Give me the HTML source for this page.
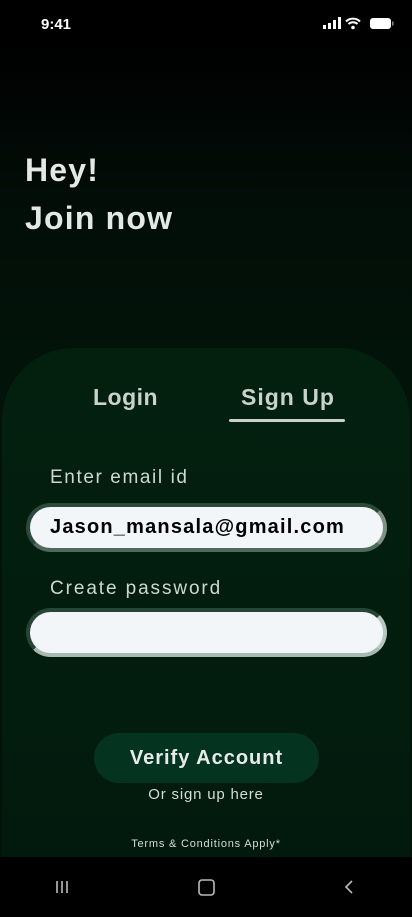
<!DOCTYPE html>
<html><head><meta charset="utf-8"><style>
*{margin:0;padding:0;box-sizing:border-box}
body{width:412px;height:917px;overflow:hidden;background:linear-gradient(#000 0,#000 40px,#020d08 200px,#021309 350px);font-family:"Liberation Sans",sans-serif;position:relative;color:#dfe6e1}
.abs{position:absolute}
.time{left:41px;top:16px;font-size:15px;color:#fff;font-weight:bold}
h1{position:absolute;left:25px;font-size:32px;font-weight:bold;color:#e4e9e5;letter-spacing:1.2px}
.card{left:2px;top:348px;width:408px;height:520px;background:linear-gradient(#03200f,#021a0d);border-radius:72px 72px 0 0}
.tab{font-size:23px;font-weight:bold;color:#c9d3cc;top:384px;letter-spacing:0.5px}
.ul{left:229px;top:419px;width:116px;height:3px;border-radius:2px;background:#c9d3cc}
.lbl{left:50px;font-size:19px;color:#ced8d1;letter-spacing:1.6px}
.inp{left:26px;width:361px;height:49px;border-radius:25px;background:#f3f6f9;border:4px solid #2a4a3a;border-right-color:#7f9088;border-bottom-color:#4e6a5c}
.btn{left:94px;top:733px;width:225px;height:50px;border-radius:25px;background:#04331f;text-align:center;line-height:50px;font-size:20px;font-weight:bold;color:#e8ece9;letter-spacing:1px}
.nav{left:0;top:857px;width:412px;height:60px;background:#000}
</style></head><body>
<div class="abs time">9:41</div>
<svg class="abs" style="left:323px;top:17px" width="72" height="14" viewBox="0 0 72 14">
<rect x="0" y="8" width="3" height="4" fill="#fff"/><rect x="5" y="6" width="3" height="6" fill="#fff"/><rect x="10" y="3" width="3" height="9" fill="#fff"/><rect x="15" y="0" width="3" height="12" fill="#fff"/>
<path d="M23 4.5a10 10 0 0 1 14 0M25.5 7a6.5 6.5 0 0 1 9 0" stroke="#fff" stroke-width="2" fill="none"/><circle cx="30" cy="10.5" r="1.8" fill="#fff"/>
<rect x="47" y="1" width="21" height="11" rx="3" fill="#fff"/><rect x="69" y="4.5" width="1.5" height="4" fill="#888"/>
</svg>
<h1 style="top:152px">Hey!</h1>
<h1 style="top:200px">Join now</h1>
<div class="abs card"></div>
<div class="abs tab" style="left:93px">Login</div>
<div class="abs tab" style="left:241px;letter-spacing:1px">Sign Up</div>
<div class="abs ul"></div>
<div class="abs lbl" style="top:467px">Enter email id</div>
<div class="abs inp" style="top:503px;padding-left:20px;line-height:41px;font-size:20px;font-weight:bold;color:#000;letter-spacing:1.2px">Jason_mansala@gmail.com</div>
<div class="abs lbl" style="top:578px;letter-spacing:1.9px">Create password</div>
<div class="abs inp" style="top:608px;border-color:#254636 #b8c8c0 #a8bab0 #254636"></div>
<div class="abs btn">Verify Account</div>
<div class="abs" style="left:0;width:412px;top:786px;text-align:center;font-size:15px;color:#d5ddd8;letter-spacing:0.8px">Or sign up here</div>
<div class="abs" style="left:0;width:412px;top:838px;text-align:center;font-size:11px;color:#d5ddd8;letter-spacing:0.8px">Terms &amp; Conditions Apply*</div>
<div class="abs nav"></div>
<svg class="abs" style="left:0;top:857px" width="412" height="60">
<g stroke="#bbb" stroke-width="1.6" fill="none"><path d="M57 24v12M62 24v12M67 24v12"/><rect x="199" y="23" width="15" height="15" rx="3"/><path d="M352 24l-6 6 6 6"/></g>
</svg>
</body></html>
